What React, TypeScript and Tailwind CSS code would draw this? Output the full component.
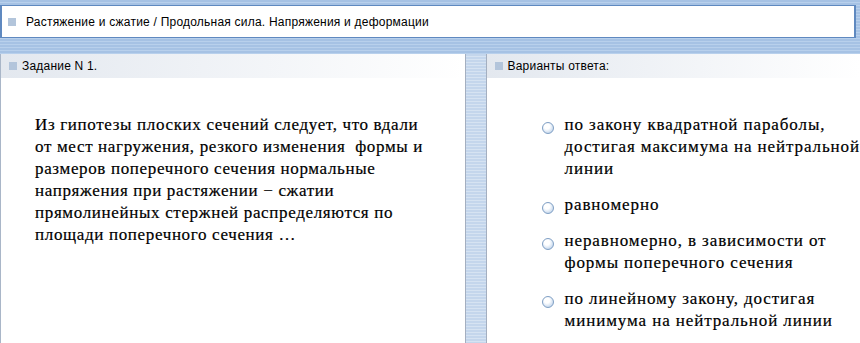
const stripes =
  'bg-[repeating-linear-gradient(180deg,#a6c2e4_0px,#a6c2e4_2px,#b8d0ec_2px,#b8d0ec_3px)]'

const question = [
  'Из гипотезы плоских сечений следует, что вдали',
  'от мест нагружения, резкого изменения\u00a0 формы и',
  'размеров поперечного сечения нормальные',
  'напряжения при растяжении − сжатии',
  'прямолинейных стержней распределяются по',
  'площади поперечного сечения …',
]

const answers = [
  ['по закону квадратной параболы,', 'достигая максимума на нейтральной', 'линии'],
  ['равномерно'],
  ['неравномерно, в зависимости от', 'формы поперечного сечения'],
  ['по линейному закону, достигая', 'минимума на нейтральной линии'],
]

function Square() {
  return <span className="inline-block w-[8px] h-[8px] bg-[#b3c5db] shrink-0" />
}

function PanelHeader({ title }: { title: string }) {
  return (
    <div className="h-[24px] flex items-center gap-[5px] pl-[8px] bg-gradient-to-r from-[#e3e8ef] to-white text-[12px] tracking-[0.2px] text-black">
      <Square />
      <span>{title}</span>
    </div>
  )
}

export default function App() {
  return (
    <div
      className={`w-[860px] h-[343px] overflow-hidden flex flex-col ${stripes}`}
      style={{ fontFamily: '"Liberation Sans", Arial, sans-serif' }}
    >
      {/* Topic bar */}
      <div className="pt-[5px] pb-[16px]">
        <div className="w-[856px] h-[33px] bg-white border-y border-[#5f89c0] border-l-2 border-r-2 flex items-center gap-[10px] pl-[6px] text-[12px] tracking-[0.22px] text-black">
          <Square />
          <span>Растяжение и сжатие / Продольная сила. Напряжения и деформации</span>
        </div>
      </div>

      <div className="flex flex-1 min-h-0">
        {/* Question */}
        <div className="w-[465px] bg-white border-l border-[#a9b6c8] flex flex-col">
          <PanelHeader title="Задание N 1." />
          <div
            className="pt-[36px] pl-[34px] text-[17px] tracking-[0.65px] leading-[22px] text-black whitespace-nowrap [-webkit-text-stroke:0.2px_#000]"
            style={{ fontFamily: '"Liberation Serif", "Times New Roman", serif' }}
          >
            {question.map((line, i) => (
              <div key={i}>{line}</div>
            ))}
          </div>
        </div>

        {/* Divider */}
        <div className="w-[22px] border-x border-[#a4afc0] bg-[repeating-linear-gradient(180deg,#c4d6ec_0px,#c4d6ec_2px,#d6e3f2_2px,#d6e3f2_3px)]" />

        {/* Answers */}
        <div className="flex-1 bg-white flex flex-col">
          <PanelHeader title="Варианты ответа:" />
          <div
            className="pt-[36px] pl-[55px] flex flex-col gap-[14px] text-[17px] tracking-[0.9px] leading-[22px] text-black whitespace-nowrap [-webkit-text-stroke:0.2px_#000]"
            style={{ fontFamily: '"Liberation Serif", "Times New Roman", serif' }}
          >
            {answers.map((lines, i) => (
              <div key={i} className="flex items-start gap-[11px]">
                <span className="mt-[8px] w-[12px] h-[12px] rounded-full border border-[#7f9fc4] bg-[radial-gradient(circle_at_40%_35%,#ffffff_0%,#ffffff_30%,#c9daee_75%,#9fbbdc_100%)] shrink-0" />
                <div>
                  {lines.map((l, j) => (
                    <div key={j}>{l}</div>
                  ))}
                </div>
              </div>
            ))}
          </div>
        </div>
      </div>
    </div>
  )
}
